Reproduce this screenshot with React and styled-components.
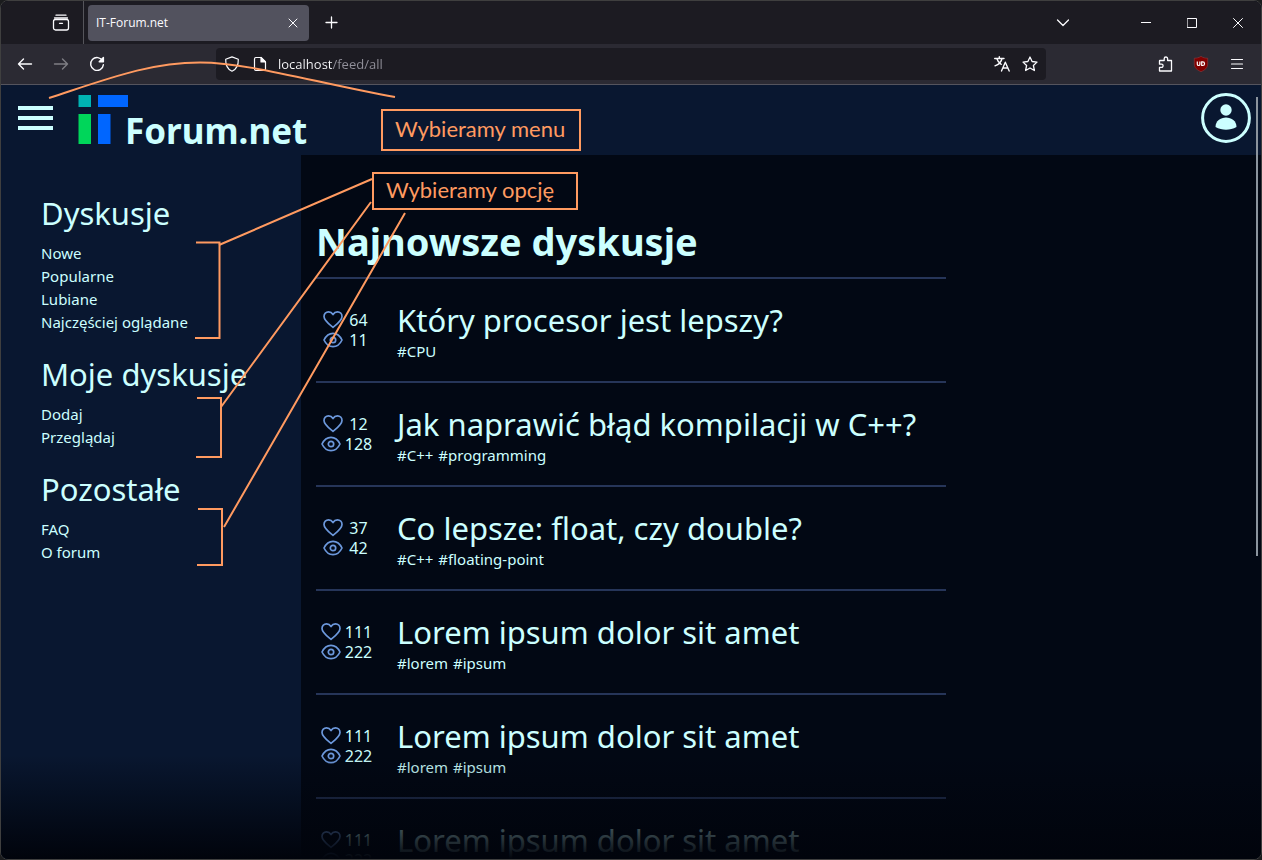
import React from "react";
import styled, { createGlobalStyle } from "styled-components";

const ink = "#cff";
const orange = "#ff9a60";

const GlobalStyle = createGlobalStyle`
  *, *::before, *::after { box-sizing: border-box; }
  body { margin: 0; background: #1b1c1e; font-family: "Noto Sans", sans-serif; }
  button { padding: 0; border: 0; background: none; color: inherit; font: inherit; cursor: pointer; }
  a { color: inherit; text-decoration: none; }
  svg { display: block; }
`;

const BrowserWindow = styled.div`
  position: relative;
  display: flex;
  flex-direction: column;
  height: 100vh;
  overflow: hidden;
  border: 1px solid #3f3f3f;
  border-radius: 8px;
  background: #020814;
`;

/* browser chrome */

const TabBar = styled.div`
  display: flex;
  flex: none;
  align-items: center;
  height: 43px;
  color: #fbfbfe;
  background: #1c1b22;
`;

const BarButton = styled.button`
  display: flex;
  flex: none;
  align-items: center;
  justify-content: center;
  width: ${(p) => p.$width || 36}px;
  height: 32px;
  opacity: ${(p) => (p.$dim ? 0.4 : 1)};
`;

const RecentArea = styled.div`
  display: flex;
  align-self: stretch;
  align-items: center;
  justify-content: flex-end;
  width: 83px;
  padding-right: 4px;
  border-right: 1px solid #55555b;
`;

const Tab = styled.div`
  display: flex;
  align-items: center;
  justify-content: space-between;
  width: 221px;
  height: 36px;
  margin: 0 4px;
  padding-left: 8px;
  border-radius: 4px;
  font: 12px/16px "Open Sans", sans-serif;
  background: #52525e;
`;

const WindowControls = styled.div`
  display: flex;
  margin-left: auto;
`;

const Toolbar = styled.div`
  display: flex;
  flex: none;
  align-items: center;
  height: 41px;
  padding: 0 6px;
  border-bottom: 1px solid #55545d;
  color: #fbfbfe;
  background: #2b2a33;
`;

const AddressBar = styled.div`
  display: flex;
  flex: 1;
  align-items: center;
  min-width: 0;
  height: 32px;
  margin: 0 101px;
  padding: 0 2px;
  border-radius: 4px;
  background: #1c1b22;
`;

const AddressInput = styled.input`
  flex: 1;
  min-width: 0;
  height: 20px;
  padding: 0;
  margin-left: 4px;
  border: 0;
  outline: 0;
  font: 13px/20px "Open Sans", sans-serif;
  color: #fbfbfe;
  background: linear-gradient(to right, #fbfbfe 54px, #92919b 54px);
  -webkit-background-clip: text;
  background-clip: text;
  -webkit-text-fill-color: transparent;
`;

/* forum page */

const Page = styled.div`
  position: relative;
  display: flex;
  flex: 1;
  flex-direction: column;
  min-height: 0;
  overflow: hidden;
  color: ${ink};
`;

const Header = styled.header`
  display: flex;
  flex: none;
  align-items: center;
  height: 70px;
  padding: 0 10px 4px 17px;
  background: #091730;
`;

const Logo = styled.a`
  display: flex;
  align-items: flex-start;
  height: 46px;
  margin-left: 25px;
`;

const LogoText = styled.span`
  font-size: 35px;
  font-weight: 700;
  line-height: 50px;
  margin-top: 11px;
  margin-left: -3px;
`;

const ProfileButton = styled.button`
  margin-left: auto;
`;

const Body = styled.div`
  display: flex;
  flex: 1;
  min-height: 0;
`;

const Sidebar = styled.nav`
  display: flex;
  flex: none;
  flex-direction: column;
  gap: 19px;
  width: 300px;
  padding: 37px 40px;
  background: #091730;
`;

const MenuTitle = styled.h2`
  margin: 0 0 8px;
  font-size: 31px;
  font-weight: 400;
  line-height: 42px;
`;

const MenuList = styled.ul`
  margin: 0;
  padding: 0;
  list-style: none;
  font-size: 15px;
  line-height: 23px;
`;

const Feed = styled.main`
  flex: 0 1 660px;
  min-width: 0;
  padding: 60px 15px 0;
`;

const FeedTitle = styled.h1`
  margin: 0;
  padding-bottom: 10px;
  font-size: 38px;
  font-weight: 700;
  line-height: 52px;
`;

const Thread = styled.article`
  display: flex;
  height: 104px;
  padding-top: 21px;
  border-top: 2px solid #263559;
`;

const Stats = styled.div`
  flex: none;
  width: 61px;
  margin-right: 20px;
  padding-top: 10px;
`;

const Stat = styled.div`
  display: flex;
  align-items: center;
  justify-content: center;
  gap: 4px;
  font-size: 16px;
  line-height: 20px;
`;

const Count = styled.span`
  min-width: 24px;
  text-align: center;
`;

const ThreadTitle = styled.h2`
  margin: 0;
  font-size: 31px;
  font-weight: 400;
  line-height: 41px;
  white-space: nowrap;
`;

const Tags = styled.div`
  display: flex;
  gap: 5px;
  font-size: 15px;
  line-height: 20px;
`;

const BottomFade = styled.div`
  position: absolute;
  inset: auto 0 0;
  height: 104px;
  background: linear-gradient(to bottom, rgba(1, 4, 12, 0), rgb(1, 4, 12));
  pointer-events: none;
`;

const ScrollThumb = styled.div`
  position: absolute;
  top: 12px;
  right: 3px;
  width: 2px;
  height: 459px;
  background: #8b949e;
`;

/* instruction notes laid over the window */

const NoteLines = styled.svg`
  position: absolute;
  top: -1px;
  left: -1px;
  pointer-events: none;
`;

const Note = styled.div`
  position: absolute;
  top: ${(p) => p.$top}px;
  left: ${(p) => p.$left}px;
  width: ${(p) => p.$width}px;
  padding: 0 12px 2px;
  border: 2px solid ${orange};
  font: 22px/${(p) => p.$height}px Lato, sans-serif;
  color: ${orange};
  white-space: nowrap;
`;

const Glyph = ({ size = 16, sw = 1.4, children }) => (
  <svg width={size} height={size} viewBox={`0 0 ${size} ${size}`} fill="none" stroke="currentColor"
    strokeWidth={sw} strokeLinecap="round" strokeLinejoin="round" aria-hidden="true">
    {children}
  </svg>
);

const HeartIcon = () => (
  <svg width="20" height="20" viewBox="0 0 20 20" fill="none" stroke="#6c98dc" strokeWidth="1.7" strokeLinejoin="round" aria-hidden="true">
    <path d="M10 17.4C7 14.9 1 10.6 1 6.5C1 3.800 3 1.900 5.500 1.900C7.400 1.900 9 2.900 10 4.500C11 2.900 12.600 1.900 14.500 1.900C17 1.900 19 3.800 19 6.500C19 10.600 13 14.900 10 17.400Z" />
  </svg>
);

const EyeIcon = () => (
  <svg width="20" height="20" viewBox="0 0 20 20" fill="none" stroke="#6c98dc" strokeWidth="1.7" aria-hidden="true">
    <path d="M1 10C3 5.800 6 3.300 10 3.300C14 3.300 17 5.800 19 10C17 14.200 14 16.700 10 16.700C6 16.700 3 14.200 1 10Z" strokeLinejoin="round" />
    <circle cx="10" cy="10" r="2.700" />
  </svg>
);

const menu = [
  { title: "Dyskusje", items: ["Nowe", "Popularne", "Lubiane", "Najczęściej oglądane"] },
  { title: "Moje dyskusje", items: ["Dodaj", "Przeglądaj"] },
  { title: "Pozostałe", items: ["FAQ", "O forum"] },
];

const lorem = { likes: 111, views: 222, title: "Lorem ipsum dolor sit amet", tags: ["#lorem", "#ipsum"] };
const threads = [
  { likes: 64, views: 11, title: "Który procesor jest lepszy?", tags: ["#CPU"] },
  { likes: 12, views: 128, title: "Jak naprawić błąd kompilacji w C++?", tags: ["#C++", "#programming"] },
  { likes: 37, views: 42, title: "Co lepsze: float, czy double?", tags: ["#C++", "#floating-point"] },
  lorem,
  lorem,
  lorem,
];

function BrowserTabs() {
  return (
    <TabBar>
      <RecentArea>
        <BarButton aria-label="Recent windows">
          <Glyph size={18} sw={1.3}>
            <path d="M4 1.200H14M2.500 4H15.500" />
            <rect x="1.500" y="5.500" width="15" height="10.500" rx="2" />
            <path d="M7.500 9.300H10.500" />
          </Glyph>
        </BarButton>
      </RecentArea>
      <Tab>
        IT-Forum.net
        <BarButton $width={32} aria-label="Close tab">
          <Glyph size={10} sw={1}><path d="M1 1L9 9M9 1L1 9" /></Glyph>
        </BarButton>
      </Tab>
      <BarButton aria-label="New tab">
        <Glyph size={13} sw={1.3}><path d="M6.500 1V12M1 6.500H12" /></Glyph>
      </BarButton>
      <WindowControls>
        <BarButton $width={120} aria-label="List all tabs">
          <Glyph size={14} sw={1.3}><path d="M1.500 4L7 9.500L12.500 4" /></Glyph>
        </BarButton>
        <BarButton $width={46} aria-label="Minimize">
          <Glyph size={10} sw={1}><path d="M0 4.500H10" /></Glyph>
        </BarButton>
        <BarButton $width={46} aria-label="Maximize">
          <Glyph size={10} sw={1}><path d="M0.500 0.500H9.500V9.500H0.500Z" /></Glyph>
        </BarButton>
        <BarButton $width={46} aria-label="Close">
          <Glyph size={10} sw={1}><path d="M0.500 0.500L9.500 9.500M9.500 0.500L0.500 9.500" /></Glyph>
        </BarButton>
      </WindowControls>
    </TabBar>
  );
}

function BrowserToolbar() {
  return (
    <Toolbar>
      <BarButton aria-label="Back">
        <Glyph sw={1.4}><path d="M14.500 8H1.500M6.500 3L1.500 8L6.500 13" /></Glyph>
      </BarButton>
      <BarButton $dim aria-label="Forward">
        <Glyph sw={1.4}><path d="M1.500 8H14.500M9.500 3L14.500 8L9.500 13" /></Glyph>
      </BarButton>
      <BarButton aria-label="Reload">
        <Glyph sw={1.4}>
          <path d="M13.700 5A6.400 6.400 0 1 0 14.400 8.600" />
          <path d="M14.400 1.500V5.800H10.200Z" fill="currentColor" />
        </Glyph>
      </BarButton>
      <AddressBar>
        <BarButton $width={28} aria-label="Tracking protection">
          <Glyph sw={1.2}><path d="M8 0.900L14.300 3.200C14.500 8.500 12.600 13.200 8 15.200C3.400 13.200 1.500 8.500 1.700 3.200Z" /></Glyph>
        </BarButton>
        <BarButton $width={28} aria-label="Site information">
          <Glyph sw={1.2}>
            <path d="M2.500 3A1.500 1.500 0 0 1 4 1.500H9L13.500 6V13A1.500 1.500 0 0 1 12 14.500H4A1.500 1.500 0 0 1 2.500 13Z" />
            <path d="M9 1.500V6H13.500Z" fill="currentColor" />
          </Glyph>
        </BarButton>
        <AddressInput aria-label="Address" defaultValue="localhost/feed/all" />
        <BarButton $width={28} aria-label="Translate">
          <Glyph sw={1.4}>
            <path d="M0.700 2.500H10M5.300 0.800V2.500M8 2.500C7.300 6 4.500 8.600 1 9.800M2.800 2.500C3.500 5 5 7 7.200 8.300" />
            <path d="M7.500 15L11.300 6.200L15.200 15M9 12H13.700" />
          </Glyph>
        </BarButton>
        <BarButton $width={28} aria-label="Bookmark this page">
          <Glyph sw={1.3}><path d="M8 1L10.100 5.500L15 6.100L11.400 9.500L12.400 14.500L8 12L3.600 14.500L4.600 9.500L1 6.100L5.900 5.500Z" /></Glyph>
        </BarButton>
      </AddressBar>
      <BarButton aria-label="Extensions">
        <Glyph sw={1.3}>
          <path d="M2.500 5V8.200H4.500A1.600 1.600 0 0 1 4.500 11.400H2.500V15H14.500V4.500H10.600V2.700A1.700 1.700 0 0 0 7.200 2.700V4.500H3A0.500 0.500 0 0 0 2.500 5Z" />
        </Glyph>
      </BarButton>
      <BarButton aria-label="uBlock Origin">
        <svg width="16" height="16" viewBox="0 0 16 16" aria-hidden="true">
          <path d="M8 0.300C10 1.700 12 2.200 14.700 2.200V8C14.700 11.800 12 14 8 15.700C4 14 1.300 11.800 1.300 8V2.200C4 2.200 6 1.700 8 0.300Z" fill="#800000" stroke="#8c3a40" strokeWidth="0.600" />
          <path d="M4.300 5.600V8.200A1.300 1.300 0 0 0 6.900 8.200V5.600M8.700 9.500V5.800H9.700A1.800 1.800 0 0 1 9.700 9.500Z" fill="none" stroke="#fff" strokeWidth="1.200" />
        </svg>
      </BarButton>
      <BarButton aria-label="Application menu">
        <Glyph size={14} sw={1.2}><path d="M1.500 2.500H12.500M1.500 7H12.500M1.500 11.500H12.500" /></Glyph>
      </BarButton>
    </Toolbar>
  );
}

function ForumHeader() {
  return (
    <Header>
      <button aria-label="Menu">
        <svg width="35" height="24" viewBox="0 0 35 24" fill={ink} aria-hidden="true">
          <rect width="35" height="4" />
          <rect y="10" width="35" height="4" />
          <rect y="20" width="35" height="4" />
        </svg>
      </button>
      <Logo href="#" aria-label="IT Forum.net">
        <svg width="50" height="50" viewBox="0 0 50 50" aria-hidden="true">
          <rect x="0.500" width="12.500" height="12" fill="#00b3b3" />
          <rect x="0.500" y="19" width="12.500" height="30" fill="#00d65a" />
          <rect x="20" width="30" height="12" fill="#0066ff" />
          <rect x="20" y="19" width="12.500" height="30" fill="#0066ff" />
        </svg>
        <LogoText>Forum.net</LogoText>
      </Logo>
      <ProfileButton aria-label="Profile">
        <svg width="50" height="50" viewBox="0 0 50 50" fill={ink} aria-hidden="true">
          <circle cx="25" cy="25" r="23.400" fill="none" stroke={ink} strokeWidth="3" />
          <circle cx="25" cy="17" r="5.700" />
          <path d="M14.500 34C14.500 28 19.500 24.500 25 24.500C30.500 24.500 35.500 28 35.500 34C29 37.500 21 37.500 14.500 34Z" />
        </svg>
      </ProfileButton>
    </Header>
  );
}

export default function App() {
  return (
    <>
      <GlobalStyle />
      <BrowserWindow>
        <BrowserTabs />
        <BrowserToolbar />
        <Page>
          <ForumHeader />
          <Body>
            <Sidebar>
              {menu.map((group) => (
                <section key={group.title}>
                  <MenuTitle>{group.title}</MenuTitle>
                  <MenuList>
                    {group.items.map((item) => (
                      <li key={item}><a href="#">{item}</a></li>
                    ))}
                  </MenuList>
                </section>
              ))}
            </Sidebar>
            <Feed>
              <FeedTitle>Najnowsze dyskusje</FeedTitle>
              {threads.map((thread, i) => (
                <Thread key={i}>
                  <Stats>
                    <Stat><HeartIcon /><Count>{thread.likes}</Count></Stat>
                    <Stat><EyeIcon /><Count>{thread.views}</Count></Stat>
                  </Stats>
                  <div>
                    <ThreadTitle><a href="#">{thread.title}</a></ThreadTitle>
                    <Tags>
                      {thread.tags.map((tag) => <a key={tag} href="#">{tag}</a>)}
                    </Tags>
                  </div>
                </Thread>
              ))}
            </Feed>
          </Body>
          <BottomFade />
          <ScrollThumb />
        </Page>
        <NoteLines width="600" height="600" viewBox="0 0 600 600" fill="none" stroke={orange} strokeWidth="2" aria-hidden="true">
          <path d="M49 98C110 78 150 62.500 200 62.500C250 62.500 320 84 395 97" />
          <path d="M372 179L219 245M371 202L221 407M405 213L224 527" />
          <path d="M196 242.500H219.500V338H195M197 398H221V457H196M198 509H222V565H197" />
        </NoteLines>
        <Note $top={108} $left={380} $width={200} $height={36}>Wybieramy menu</Note>
        <Note $top={171} $left={371} $width={206} $height={32}>Wybieramy opcję</Note>
      </BrowserWindow>
    </>
  );
}
